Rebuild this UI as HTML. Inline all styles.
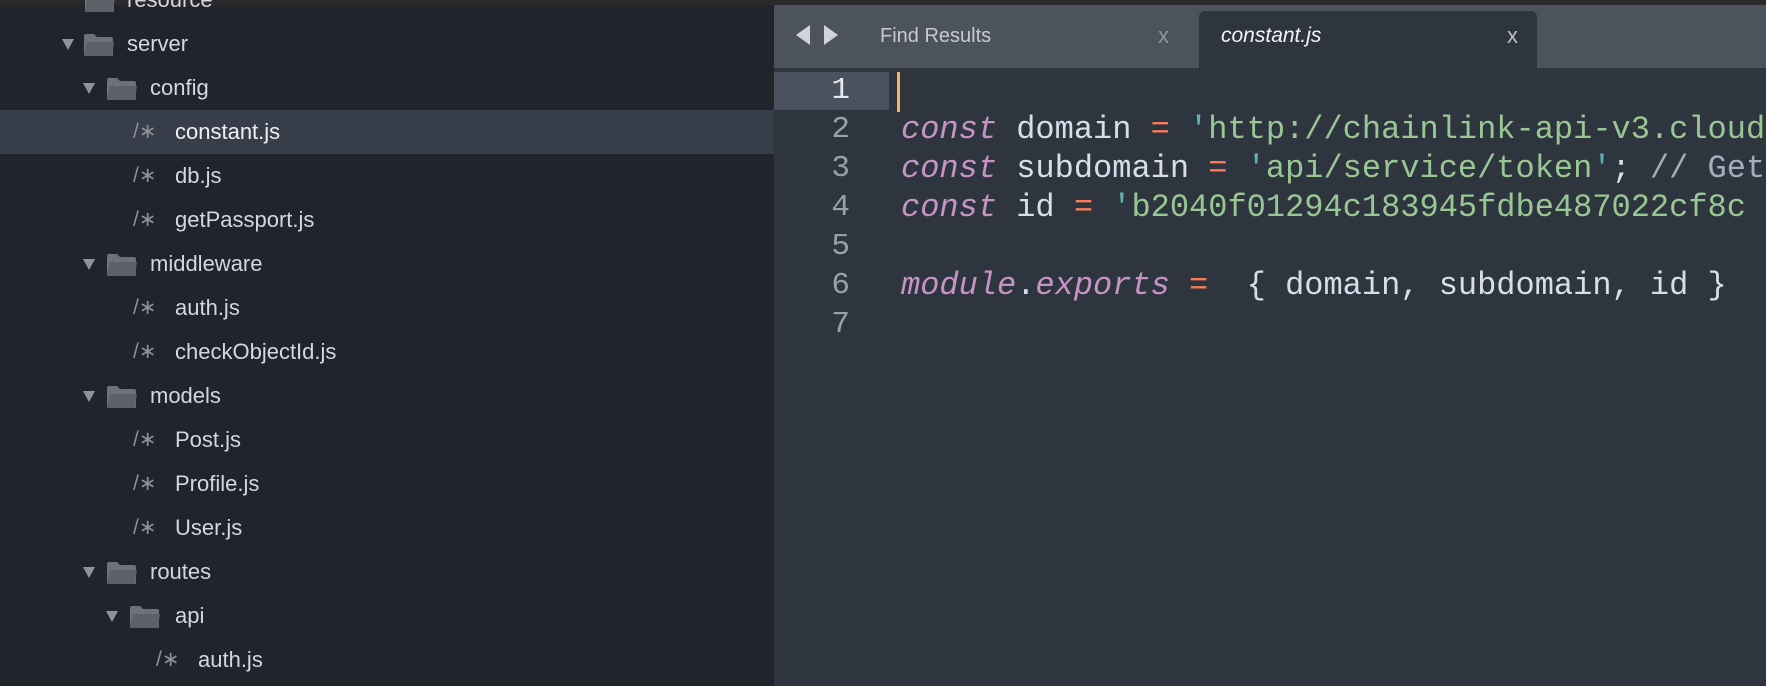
<!DOCTYPE html>
<html><head><meta charset="utf-8"><style>
*{margin:0;padding:0;box-sizing:border-box}
body{width:1766px;height:686px;overflow:hidden;background:#21252b;position:relative;font-family:"Liberation Sans",sans-serif}
.top{position:absolute;left:0;top:0;width:1766px;height:5px;background:#2a2a2a}
.side{position:absolute;left:0;top:5px;width:774px;height:681px;background:#21252b}
.row{position:absolute;left:0;width:774px;height:44px;color:#d3d7de;font-size:22px;line-height:44px}
.row.sel{background:#383e49;color:#eef0f3}
.tri{position:absolute;top:17px;width:0;height:0;border-left:6px solid transparent;border-right:6px solid transparent;border-top:11px solid #8e939b}
.fold{position:absolute;top:11px;width:32px;height:24px}
.fi{position:absolute;color:#8b9099;font-size:21px}
.t{position:absolute}
.tabs{position:absolute;left:774px;top:5px;width:992px;height:63px;background:#4c535d}
.atab{position:absolute;left:425px;top:6px;width:338px;height:57px;background:#2f353f;border-radius:6px 6px 0 0}
.ed{position:absolute;left:774px;top:68px;width:992px;height:618px;background:#2f353f}
.ln{position:absolute;left:0;width:76px;text-align:right;font-family:"Liberation Mono",monospace;font-size:31px;color:#9aa0ab}
.code{position:absolute;left:127px;font-family:"Liberation Mono",monospace;font-size:32px;color:#d8dee9;white-space:pre}
.k{color:#c594c5;font-style:italic}.o{color:#f97b58}.s{color:#99c794}.q{color:#5fb3b3}.c{color:#a6acb9}
</style></head><body>
<div class="top"></div>
<div class="side">
<svg width="0" height="0" style="position:absolute"><defs><symbol id="f" viewBox="0 0 32 24"><path d="M1 3 Q1 1 3 1 H11 L14 4 H28 Q30 4 30 6 V22 Q30 23 29 23 H2 Q1 23 1 22Z" fill="#6d727a"/><path d="M4 9 H31 L29 22 Q29 23 28 23 H2 Q1 23 1 22Z" fill="#5c6168"/></symbol></defs></svg>
<div class="row" style="top:-27px"><svg class="fold" style="left:84px"><use href="#f"/></svg><span class="t" style="left:127px">resource</span></div>
<div class="row" style="top:17px"><div class="tri" style="left:62px"></div><svg class="fold" style="left:83px"><use href="#f"/></svg><span class="t" style="left:127px">server</span></div>
<div class="row" style="top:61px"><div class="tri" style="left:83px"></div><svg class="fold" style="left:106px"><use href="#f"/></svg><span class="t" style="left:150px">config</span></div>
<div class="row sel" style="top:105px"><span class="fi" style="left:133px">/∗</span><span class="t" style="left:175px">constant.js</span></div>
<div class="row" style="top:149px"><span class="fi" style="left:133px">/∗</span><span class="t" style="left:175px">db.js</span></div>
<div class="row" style="top:193px"><span class="fi" style="left:133px">/∗</span><span class="t" style="left:175px">getPassport.js</span></div>
<div class="row" style="top:237px"><div class="tri" style="left:83px"></div><svg class="fold" style="left:106px"><use href="#f"/></svg><span class="t" style="left:150px">middleware</span></div>
<div class="row" style="top:281px"><span class="fi" style="left:133px">/∗</span><span class="t" style="left:175px">auth.js</span></div>
<div class="row" style="top:325px"><span class="fi" style="left:133px">/∗</span><span class="t" style="left:175px">checkObjectId.js</span></div>
<div class="row" style="top:369px"><div class="tri" style="left:83px"></div><svg class="fold" style="left:106px"><use href="#f"/></svg><span class="t" style="left:150px">models</span></div>
<div class="row" style="top:413px"><span class="fi" style="left:133px">/∗</span><span class="t" style="left:175px">Post.js</span></div>
<div class="row" style="top:457px"><span class="fi" style="left:133px">/∗</span><span class="t" style="left:175px">Profile.js</span></div>
<div class="row" style="top:501px"><span class="fi" style="left:133px">/∗</span><span class="t" style="left:175px">User.js</span></div>
<div class="row" style="top:545px"><div class="tri" style="left:83px"></div><svg class="fold" style="left:106px"><use href="#f"/></svg><span class="t" style="left:150px">routes</span></div>
<div class="row" style="top:589px"><div class="tri" style="left:106px"></div><svg class="fold" style="left:129px"><use href="#f"/></svg><span class="t" style="left:175px">api</span></div>
<div class="row" style="top:633px"><span class="fi" style="left:156px">/∗</span><span class="t" style="left:198px">auth.js</span></div>
</div>
<div class="tabs">
<svg style="position:absolute;left:20px;top:20px" width="46" height="20"><path d="M16 0 L2 10 L16 20Z" fill="#d0d4da"/><path d="M30 0 L44 10 L30 20Z" fill="#d0d4da"/></svg>
<span style="position:absolute;left:106px;top:20px;font-size:20px;color:#c5cad2">Find Results</span>
<span style="position:absolute;left:384px;top:18px;font-size:22px;color:#8e949c">x</span>
<div class="atab">
<span style="position:absolute;left:22px;top:13px;font-size:21px;font-style:italic;color:#f2f4f7">constant.js</span>
<span style="position:absolute;left:308px;top:12px;font-size:22px;color:#b7bcc4">x</span>
</div>
</div>
<div class="ed">
<div style="position:absolute;left:0;top:4px;width:115px;height:38px;background:#4a525f"></div>
<div style="position:absolute;left:123px;top:4px;width:3px;height:40px;background:#f9ae58"></div>
<div class="ln" style="top:5px;color:#e6e9ee">1</div>
<div class="ln" style="top:44px">2</div>
<div class="ln" style="top:83px">3</div>
<div class="ln" style="top:122px">4</div>
<div class="ln" style="top:161px">5</div>
<div class="ln" style="top:200px">6</div>
<div class="ln" style="top:239px">7</div>
<div class="code" style="top:43px"><span class="k">const</span> domain <span class="o">=</span> <span class="q">'</span><span class="s">http://chainlink-api-v3.cloud</span></div>
<div class="code" style="top:82px"><span class="k">const</span> subdomain <span class="o">=</span> <span class="q">'</span><span class="s">api/service/token</span><span class="q">'</span>; <span class="c">// Get</span></div>
<div class="code" style="top:121px"><span class="k">const</span> id <span class="o">=</span> <span class="q">'</span><span class="s">b2040f01294c183945fdbe487022cf8c</span></div>
<div class="code" style="top:199px"><span class="k">module</span>.<span class="k">exports</span> <span class="o">=</span>  { domain, subdomain, id }</div>
</div>
</body></html>
